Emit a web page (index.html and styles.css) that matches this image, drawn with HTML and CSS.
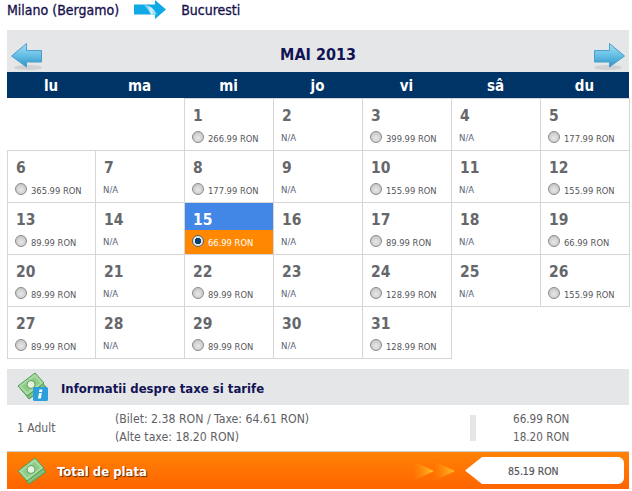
FILE: index.html
```html
<!DOCTYPE html>
<html lang="ro">
<head>
<meta charset="utf-8">
<title>Calendar</title>
<link rel="stylesheet" href="styles.css">
</head>
<body>
<svg class="defs" width="0" height="0" aria-hidden="true">
  <defs>
    <linearGradient id="navg" x1="0" y1="0" x2="0" y2="1"><stop offset="0" stop-color="#a8def3"/><stop offset=".5" stop-color="#66bfe6"/><stop offset="1" stop-color="#2f93c6"/></linearGradient>
    <linearGradient id="chev" x1="0" y1="0" x2="1" y2="0"><stop offset="0" stop-color="#ff9a10" stop-opacity="0"/><stop offset="1" stop-color="#ffc42c"/></linearGradient>
    <linearGradient id="shine" x1="0" y1="0" x2="1" y2="0"><stop offset="0" stop-color="#c8eefb" stop-opacity="0"/><stop offset=".6" stop-color="#d4f1fb"/><stop offset="1" stop-color="#6fcdf0"/></linearGradient>
    <g id="money">
      <path d="M4 17 20 5l9 10-17 12z" fill="#7fc07a" stroke="#4f9a55"/>
      <path d="M1 14 18 1l9 10-17 13z" fill="#a6da9f" stroke="#4f9a55"/>
      <path d="M5 14 17.500 5l5.500 6-13 9z" fill="#8ecb88"/>
      <circle cx="14" cy="12.500" r="4" fill="#e3f3de" stroke="#5f9f5c"/>
    </g>
  </defs>
</svg>
<main class="page">
  <header class="route">
    <span>Milano (Bergamo)</span>
    <svg class="route-arrow" width="32" height="19" viewBox="0 0 32 19">
      <path d="M0 4.500h21V0l11 9.500L21 19v-4.500H0z" fill="#0fa9e6"/>
      <path d="M8 4.500Q19 5 23 14.500H17Q14 8 8 4.500z" fill="url(#shine)"/>
    </svg>
    <span>Bucuresti</span>
  </header>

  <section class="month-bar">
    <svg class="nav" width="32" height="27" viewBox="0 0 32 27"><ellipse cx="17" cy="24.500" rx="14" ry="2.500" fill="#d0d1d3"/><path d="M.5 13 15.500.5v7h15v11.500h-15v5z" fill="url(#navg)" stroke="#4a9fcb"/></svg>
    <h1>MAI 2013</h1>
    <svg class="nav" width="32" height="27" viewBox="0 0 32 27"><ellipse cx="15" cy="24.500" rx="14" ry="2.500" fill="#d0d1d3"/><path d="M31.500 13 16.500.5v7h-15v11.500h15v5z" fill="url(#navg)" stroke="#4a9fcb"/></svg>
  </section>

  <div class="weekdays">
    <span>lu</span><span>ma</span><span>mi</span><span>jo</span><span>vi</span><span>sâ</span><span>du</span>
  </div>

  <div class="days">
    <div class="blank"></div><div class="blank"></div>
    <div class="day"><b>1</b><label><i class="radio"></i>266.99 RON</label></div>
    <div class="day"><b>2</b><small>N/A</small></div>
    <div class="day"><b>3</b><label><i class="radio"></i>399.99 RON</label></div>
    <div class="day"><b>4</b><small>N/A</small></div>
    <div class="day"><b>5</b><label><i class="radio"></i>177.99 RON</label></div>
    <div class="day"><b>6</b><label><i class="radio"></i>365.99 RON</label></div>
    <div class="day"><b>7</b><small>N/A</small></div>
    <div class="day"><b>8</b><label><i class="radio"></i>177.99 RON</label></div>
    <div class="day"><b>9</b><small>N/A</small></div>
    <div class="day"><b>10</b><label><i class="radio"></i>155.99 RON</label></div>
    <div class="day"><b>11</b><small>N/A</small></div>
    <div class="day"><b>12</b><label><i class="radio"></i>155.99 RON</label></div>
    <div class="day"><b>13</b><label><i class="radio"></i>89.99 RON</label></div>
    <div class="day"><b>14</b><small>N/A</small></div>
    <div class="day selected"><b>15</b><label><i class="radio on"></i>66.99 RON</label></div>
    <div class="day"><b>16</b><small>N/A</small></div>
    <div class="day"><b>17</b><label><i class="radio"></i>89.99 RON</label></div>
    <div class="day"><b>18</b><small>N/A</small></div>
    <div class="day"><b>19</b><label><i class="radio"></i>66.99 RON</label></div>
    <div class="day"><b>20</b><label><i class="radio"></i>89.99 RON</label></div>
    <div class="day"><b>21</b><small>N/A</small></div>
    <div class="day"><b>22</b><label><i class="radio"></i>89.99 RON</label></div>
    <div class="day"><b>23</b><small>N/A</small></div>
    <div class="day"><b>24</b><label><i class="radio"></i>128.99 RON</label></div>
    <div class="day"><b>25</b><small>N/A</small></div>
    <div class="day"><b>26</b><label><i class="radio"></i>155.99 RON</label></div>
    <div class="day"><b>27</b><label><i class="radio"></i>89.99 RON</label></div>
    <div class="day"><b>28</b><small>N/A</small></div>
    <div class="day"><b>29</b><label><i class="radio"></i>89.99 RON</label></div>
    <div class="day"><b>30</b><small>N/A</small></div>
    <div class="day"><b>31</b><label><i class="radio"></i>128.99 RON</label></div>
  </div>

  <section class="info-head">
    <svg class="money" width="34" height="32" viewBox="0 0 34 32">
      <use href="#money" y="1"/>
      <rect x="16" y="16" width="15" height="14" rx="1.500" fill="#2b9fdc"/>
      <path d="M22.500 18.500h3l-.5 2.500h-3zM22 22h2.800l-1 5.500H21z" fill="#fff"/>
    </svg>
    <h2>Informatii despre taxe si tarife</h2>
  </section>

  <section class="fare">
    <div class="fare-who">1 Adult</div>
    <div class="fare-detail"><p>(Bilet: 2.38 RON / Taxe: 64.61 RON)</p><p>(Alte taxe: 18.20 RON)</p></div>
    <div class="fare-sep"></div>
    <div class="fare-sum"><p>66.99 RON</p><p>18.20 RON</p></div>
  </section>

  <section class="total">
    <svg class="money" width="30" height="28" viewBox="0 0 30 28"><use href="#money"/></svg>
    <h2>Total de plata</h2>
    <svg class="chevrons" width="42" height="20" viewBox="0 0 42 20">
      <path d="M0 0 21 10 0 20z" fill="url(#chev)"/>
      <path d="M21 0 42 10 21 20z" fill="url(#chev)"/>
    </svg>
    <div class="total-value">85.19 RON</div>
  </section>
</main>
</body>
</html>
```

FILE: styles.css
```css
* { box-sizing: border-box; }
html, body { margin: 0; padding: 0; background: #fff; }
body { font-family: "DejaVu Sans Condensed", "DejaVu Sans", Verdana, sans-serif; color: #5f6064; width: 632px; height: 491px; overflow: hidden; }
.defs { position: absolute; }
.page { width: 622px; margin-left: 7px; }
p, h1, h2 { margin: 0; }

.route { height: 30px; display: flex; align-items: flex-start; font-size: 14px; color: #16114c; -webkit-text-stroke: .3px #16114c; }
.route span { line-height: 20px; }
.route-arrow { margin: 0 15px; }

.month-bar { height: 42px; background: #e5e6e8; display: flex; justify-content: space-between; align-items: flex-start; padding: 13px 4px 0 4px; }
.month-bar h1 { font-size: 16px; font-weight: 700; color: #111354; line-height: 24px; }

.weekdays { height: 26px; padding-top: 1px; background: #003366; display: grid; grid-template-columns: 88px repeat(6, 89px); }
.weekdays span { color: #fff; font-weight: 700; font-size: 15px; line-height: 26px; text-align: center; }

.days { display: grid; grid-template-columns: 88px repeat(6, 89px); grid-auto-rows: 52px; }
.day { border: 1px solid #d6d6d6; margin: 0 -1px -1px 0; padding: 7px 0 0 8px; display: flex; flex-direction: column; }
.day b { font-size: 15.500px; line-height: 20px; font-weight: 700; color: #66676b; }
.day small { font-size: 9.500px; line-height: 12px; margin: 6px 0 0 -1px; color: #5b6478; }
.day label { display: flex; align-items: center; font-size: 9.300px; line-height: 14px; margin: 6px 0 0 -1px; color: #55565a; }
.radio { width: 12px; height: 12px; border-radius: 50%; margin-right: 4px; flex: none; border: 1px solid #8a8a8a; background: radial-gradient(circle at 50% 60%, #e8e8e8, #bdbdbd); position: relative; top: -2px; }
.radio.on { background: radial-gradient(circle, #0b3f6b 0 3px, #dfe7ec 3.500px); border-color: #55606b; }
.selected { background: linear-gradient(#4286e6 0 27px, #ff8800 27px); }
.selected b { color: #fff; }
.selected label { color: #fff; }

.info-head { margin-top: 11px; height: 36px; background: #e5e6e8; display: flex; align-items: center; padding-left: 10px; }
.info-head h2 { font-size: 13px; font-weight: 700; color: #111354; margin: 2px 0 0 10px; }

.fare { height: 47px; display: flex; align-items: center; border-bottom: 1px solid #cfcfcf; font-size: 12px; color: #5f6064; }
.fare p { line-height: 18px; }
.fare-who { width: 108px; padding-left: 10px; }
.fare-detail { width: 355px; font-size: 12.200px; }
.fare-sep { width: 6px; height: 26px; background: #e5e6e8; margin-right: 37px; }
.fare-sum { font-size: 11.600px; }

.total { height: 37px; background: linear-gradient(#ff8205, #ff6400); display: flex; align-items: center; padding-left: 10px; }
.total h2 { font-size: 13px; font-weight: 700; color: #fff; margin: 2px 0 0 10px; text-shadow: 1px 1px 1px #5d2b00; }
.chevrons { margin-left: auto; margin-right: 10px; }
.total-value { width: 159px; height: 27px; margin-right: 5px; background: #fff; clip-path: polygon(0 50%, 17px 0, 100% 0, 100% 100%, 17px 100%); border-radius: 0 6px 6px 0; display: flex; align-items: center; padding-left: 43px; font-size: 10.400px; color: #55565a; -webkit-text-stroke: .2px #55565a; }
```
